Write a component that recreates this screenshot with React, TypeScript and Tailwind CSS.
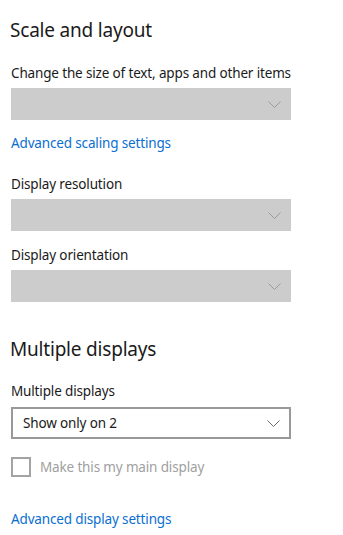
const FONT = "font-['Segoe_UI','Noto_Sans',sans-serif]";

function Chevron({ dark }: { dark?: boolean }) {
  return (
    <svg width="13" height="7" viewBox="0 0 13 7" fill="none">
      <path d="M0.5 0.5 L6.5 6.5 L12.5 0.5" stroke={dark ? '#6b6b6b' : '#9a9a9a'} strokeWidth="1" />
    </svg>
  );
}

function DisabledSelect() {
  return (
    <div className="w-[280px] h-[32px] bg-[#cccccc] flex items-center justify-end pr-[10px]">
      <Chevron />
    </div>
  );
}

function Label({ children }: { children: React.ReactNode }) {
  return <p className="text-[13.5px] tracking-[-0.15px] leading-[20px] text-[#1a1a1a]">{children}</p>;
}

export default function App() {
  return (
    <div className={`${FONT} bg-white w-[343px] h-[535px] pl-[11px] pt-[16px]`}>
      <h2 className="text-[19px] tracking-[-0.2px] leading-[28px] text-[#1a1a1a] -ml-px">Scale and layout</h2>

      <div className="mt-[19px]">
        <Label>Change the size of text, apps and other items</Label>
      </div>
      <div className="mt-[5px]">
        <DisabledSelect />
      </div>
      <a className="block mt-[13px] text-[13.5px] tracking-[-0.15px] leading-[20px] text-[#0a6ed1]">Advanced scaling settings</a>

      <div className="mt-[21px]">
        <Label>Display resolution</Label>
      </div>
      <div className="mt-[5px]">
        <DisabledSelect />
      </div>

      <div className="mt-[14px]">
        <Label>Display orientation</Label>
      </div>
      <div className="mt-[5px]">
        <DisabledSelect />
      </div>

      <h2 className="mt-[33px] text-[19px] tracking-[-0.2px] leading-[28px] text-[#1a1a1a] -ml-px">Multiple displays</h2>

      <div className="mt-[18px]">
        <Label>Multiple displays</Label>
      </div>
      <div className="mt-[6px] w-[280px] h-[32px] border-2 border-[#999999] bg-white flex items-center justify-between pl-[10px] pr-[9px]">
        <span className="text-[13.5px] tracking-[-0.15px] text-[#1a1a1a]">Show only on 2</span>
        <Chevron dark />
      </div>

      <div className="mt-[18px] flex items-center gap-[9px]">
        <div className="w-[20px] h-[20px] border-2 border-[#a3a3a3]" />
        <span className="text-[13.5px] tracking-[-0.15px] leading-[20px] text-[#a0a0a0]">Make this my main display</span>
      </div>

      <a className="block mt-[32px] text-[13.5px] tracking-[-0.15px] leading-[20px] text-[#0a6ed1]">Advanced display settings</a>
    </div>
  );
}
